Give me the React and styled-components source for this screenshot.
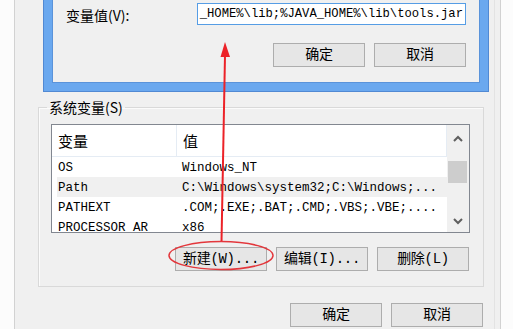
import React from "react";
import styled, { createGlobalStyle } from "styled-components";

const rows = [
  { name: "OS", value: "Windows_NT" },
  { name: "Path", value: "C:\\Windows\\system32;C:\\Windows;...", selected: true },
  { name: "PATHEXT", value: ".COM;.EXE;.BAT;.CMD;.VBS;.VBE;...." },
  { name: "PROCESSOR_AR", value: "x86" },
];

function Chevron({ up }) {
  return (
    <svg width="10" height="7" viewBox="0 0 10 7">
      <path
        d={up ? "M1 6 L5 2 L9 6" : "M1 1 L5 5 L9 1"}
        fill="none"
        stroke="#5f5f5f"
        strokeWidth="2"
      />
    </svg>
  );
}

export default function App() {
  return (
    <>
      <GlobalStyle />
      <Page>
        <Window>
          <EditDialog>
            <DialogBody>
              <FieldRow>
                <FieldLabel>变量值(V):</FieldLabel>
                <ValueBox>
                  <span>_HOME%\lib;%JAVA_HOME%\lib\tools.jar</span>
                </ValueBox>
              </FieldRow>
              <ButtonRow $top={18}>
                <Button>确定</Button>
                <Button>取消</Button>
              </ButtonRow>
            </DialogBody>
          </EditDialog>

          <Group>
            <Legend>系统变量(S)</Legend>
            <ListBox>
              <ListMain>
                <HeaderRow>
                  <HeaderCell $first>变量</HeaderCell>
                  <HeaderCell>值</HeaderCell>
                </HeaderRow>
                {rows.map((r) => (
                  <Row key={r.name} $selected={r.selected}>
                    <Cell $first>{r.name}</Cell>
                    <Cell>{r.value}</Cell>
                  </Row>
                ))}
              </ListMain>
              <ScrollBar>
                <ArrowButton $h={27}>
                  <Chevron up />
                </ArrowButton>
                <Thumb />
                <Track />
                <ArrowButton $h={21}>
                  <Chevron />
                </ArrowButton>
              </ScrollBar>
            </ListBox>
            <ButtonRow $top={14} $right={14}>
              <Button>新建(W)...</Button>
              <Button>编辑(I)...</Button>
              <Button>删除(L)</Button>
            </ButtonRow>
          </Group>

          <ButtonRow $top={16} $right={17}>
            <Button>确定</Button>
            <Button>取消</Button>
          </ButtonRow>
        </Window>

        <Annotation viewBox="0 0 513 329">
          <line x1="221.5" y1="242" x2="225" y2="55" stroke="#ec2228" strokeWidth="2" />
          <polygon points="225,42 220.5,57 230,57" fill="#ec2228" />
          <ellipse
            cx="221"
            cy="255.5"
            rx="52"
            ry="14"
            fill="none"
            stroke="#e3373c"
            strokeWidth="1.5"
          />
        </Annotation>
      </Page>
    </>
  );
}

const GlobalStyle = createGlobalStyle`
  body {
    margin: 0;
    background: #ffffff;
    font-family: "Noto Sans CJK SC", "Noto Sans", sans-serif;
    color: #000;
  }
`;

const Page = styled.div`
  position: relative;
  width: 513px;
  height: 329px;
  overflow: hidden;
  background: #fcfcfc;
`;

const Window = styled.div`
  box-sizing: border-box;
  margin-left: 14px;
  width: 487px;
  height: 329px;
  display: flex;
  flex-direction: column;
  background: #f0f0f0;
  border-left: 1px solid #d2d2d2;
  border-right: 1px solid #d2d2d2;
  box-shadow: inset -5px 0 0 #f0f0f0, inset -6px 0 0 #e3e3e3;
`;

const EditDialog = styled.div`
  box-sizing: border-box;
  margin-left: 28px;
  width: 446px;
  padding: 0 8px 8px;
  background: #6aa8ef;
  border: 1px solid #5189d3;
  border-top: none;
`;

const DialogBody = styled.div`
  display: flex;
  flex-direction: column;
  padding: 3px 13px 15px;
  background: #f0f0f0;
  border: 1px solid #5a93da;
  border-top: none;
`;

const FieldRow = styled.div`
  display: flex;
  align-items: center;
  height: 22px;
`;

const FieldLabel = styled.span`
  font-size: 14px;
  line-height: 16px;
  padding-top: 1px;
`;

const ValueBox = styled.div`
  box-sizing: border-box;
  margin-left: auto;
  width: 269px;
  height: 22px;
  display: flex;
  align-items: center;
  justify-content: flex-end;
  overflow: hidden;
  padding-right: 2px;
  background: #fff;
  border: 1px solid #569de5;
  font-family: "Liberation Mono", monospace;
  font-size: 12.2px;
  white-space: nowrap;
`;

const ButtonRow = styled.div`
  display: flex;
  justify-content: flex-end;
  gap: 9px;
  margin-top: ${(p) => p.$top || 0}px;
  padding-right: ${(p) => p.$right || 0}px;
`;

const Button = styled.button`
  box-sizing: border-box;
  width: 92px;
  height: 24px;
  padding: 0;
  display: flex;
  align-items: center;
  justify-content: center;
  background: #e6e6e6;
  border: 1px solid #adadad;
  border-radius: 0;
  font-family: "Liberation Mono", "Noto Sans CJK SC", monospace;
  font-size: 14px;
  line-height: 16px;
  color: #000;
  letter-spacing: -0.3px;
`;

const Group = styled.fieldset`
  box-sizing: border-box;
  margin: 7px 0 0 23px;
  width: 446px;
  padding: 0 0 15px 0;
  border: 1px solid #d9d9d9;
  box-shadow: inset 1px 1px 0 #fbfbfb;
  min-width: 0;
`;

const Legend = styled.legend`
  margin-left: 8px;
  padding: 0 2px;
  font-size: 14px;
  line-height: 16px;
`;

const ListBox = styled.div`
  box-sizing: border-box;
  margin: 9px 0 0 12px;
  width: 419px;
  height: 109px;
  display: grid;
  grid-template-columns: 1fr 22px;
  background: #fff;
  border: 1px solid #828790;
  overflow: hidden;
`;

const ListMain = styled.div`
  overflow: hidden;
`;

const HeaderRow = styled.div`
  display: flex;
  height: 31px;
  border-bottom: 1px solid #e5ecf4;
  border-right: 1px solid #e5ecf4;
`;

const HeaderCell = styled.div`
  box-sizing: border-box;
  display: flex;
  align-items: center;
  width: ${(p) => (p.$first ? "125px" : "auto")};
  padding-left: 6px;
  font-size: 15px;
  border-right: ${(p) => (p.$first ? "1px solid #e5ecf4" : "none")};
`;

const Row = styled.div`
  box-sizing: border-box;
  display: grid;
  grid-template-columns: 119px 1fr;
  align-items: center;
  height: 20px;
  padding-top: 3px;
  margin-left: 5px;
  background: ${(p) => (p.$selected ? "#f0f0f0" : "transparent")};
  font-family: "Liberation Mono", monospace;
  font-size: 12.5px;
  line-height: 15px;
  white-space: nowrap;
`;

const Cell = styled.span`
  padding-left: ${(p) => (p.$first ? "1px" : "6px")};
  overflow: hidden;
`;

const ScrollBar = styled.div`
  display: flex;
  flex-direction: column;
  background: #f0f0f0;
`;

const ArrowButton = styled.div`
  height: ${(p) => p.$h}px;
  display: flex;
  align-items: center;
  justify-content: center;
`;

const Thumb = styled.div`
  margin: 9px 0 0 1px;
  width: 19px;
  height: 22px;
  background: #cdcdcd;
`;

const Track = styled.div`
  flex: 1;
`;

const Annotation = styled.svg`
  position: absolute;
  left: 0;
  top: 0;
  width: 513px;
  height: 329px;
  pointer-events: none;
`;
